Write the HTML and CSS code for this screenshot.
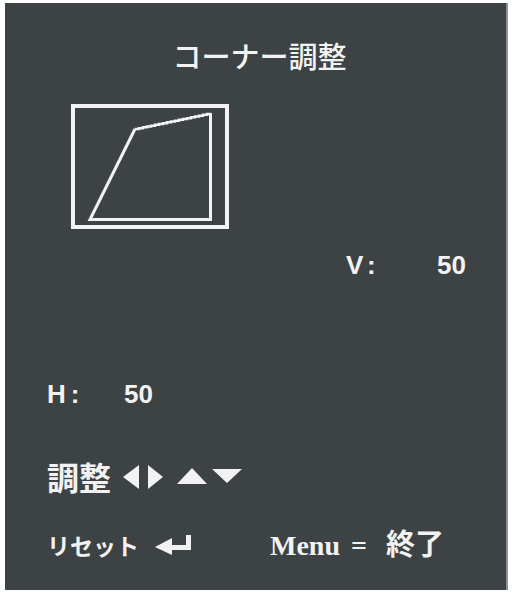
FILE: index.html
```html
<!DOCTYPE html>
<html lang="ja">
<head>
<meta charset="utf-8">
<link rel="stylesheet" href="styles.css">
</head>
<body>
<div class="panel">
  <div class="title">コーナー調整</div>
  <svg class="diagram" width="158" height="126" viewBox="0 0 158 126">
    <rect x="2" y="2" width="154" height="121" fill="none" stroke="#f2f2f2" stroke-width="4"/>
    <polyline points="64,25 19,115.5 139.5,115.5 139.5,9" fill="none" stroke="#f2f2f2" stroke-width="3"/>
    <polyline points="64,25 68,25 68,24.2 72,24.2 72,23.3 76,23.3 76,22.5 80,22.5 80,21.7 84,21.7 84,20.8 88,20.8 88,20 92,20 92,19.2 96,19.2 96,18.3 100,18.3 100,17.5 104,17.5 104,16.7 108,16.7 108,15.8 112,15.8 112,15 116,15 116,14.2 120,14.2 120,13.3 124,13.3 124,12.5 128,12.5 128,11.7 132,11.7 132,10.8 136,10.8 136,10 139.5,10" fill="none" stroke="#f2f2f2" stroke-width="2.5"/>
  </svg>
  <div class="row-v"><span class="lbl lbl-v">V:</span><span class="val">50</span></div>
  <div class="row-h"><span class="lbl lbl-h">H:</span><span class="val">50</span></div>
  <div class="row-adj">
    <span class="jp-big">調整</span>
    <svg class="keys" width="120" height="30" viewBox="0 0 120 30">
      <polygon points="0,16 16,4 16,28" fill="#f2f2f2"/>
      <polygon points="25,4 40,16 25,28" fill="#f2f2f2"/>
      <polygon points="54,23 69,7 84,23" fill="#f2f2f2"/>
      <polygon points="89,8 119,8 104,22" fill="#f2f2f2"/>
    </svg>
  </div>
  <div class="row-bottom">
    <span class="jp-reset">リセット</span>
    <svg class="enter" width="36" height="20" viewBox="0 0 36 20">
      <polygon points="0,12 17,3 17,20" fill="#f2f2f2"/>
      <rect x="16" y="10" width="20" height="5" fill="#f2f2f2"/>
      <rect x="31" y="0" width="5" height="15" fill="#f2f2f2"/>
    </svg>
    <span class="menu">Menu</span><span class="eq">=</span><span class="jp-end">終了</span>
  </div>
</div>
</body>
</html>
```

FILE: styles.css
```css
html, body {
  margin: 0;
  padding: 0;
  background: #ffffff;
}

.panel {
  margin: 3px 0 0 5px;
  width: 503px;
  height: 587px;
  box-sizing: border-box;
  background: #3d4244;
  border-right: 2px solid #8e9192;
  color: #f2f2f2;
  padding: 38px 0 0 42px;
  font-family: "Liberation Sans", Arial, sans-serif;
}

.title {
  font-family: "Noto Sans CJK JP", sans-serif;
  font-size: 29px;
  line-height: 28px;
  font-weight: 500;
  text-align: center;
  margin-left: -42px;
  padding-left: 8px;
}

.diagram {
  display: block;
  margin: 35px 0 0 24px;
}

.row-v,
.row-h {
  display: flex;
  font-size: 26px;
  line-height: 26px;
  font-weight: bold;
}

.row-v {
  margin: 22px 0 0 299px;
}

.row-h {
  margin: 103px 0 0 0;
}

.lbl-v {
  width: 91px;
  letter-spacing: 5px;
}

.lbl-h {
  width: 77px;
  letter-spacing: 5px;
}

.row-adj {
  display: flex;
  align-items: center;
  margin-top: 53px;
  height: 32px;
}

.jp-big {
  font-family: "Noto Sans CJK JP", sans-serif;
  font-size: 32px;
  line-height: 32px;
  font-weight: bold;
}

.keys {
  display: block;
  margin-left: 12px;
}

.row-bottom {
  display: flex;
  align-items: baseline;
  margin-top: 35px;
  line-height: 30px;
}

.jp-reset {
  font-family: "Noto Sans CJK JP", sans-serif;
  font-size: 23px;
  font-weight: bold;
}

.enter {
  display: block;
  align-self: center;
  margin-left: 16px;
  position: relative;
  top: 1px;
}

.menu,
.eq {
  font-family: "Liberation Serif", "Times New Roman", serif;
  font-size: 28px;
  font-weight: bold;
}

.menu {
  margin-left: 79px;
}

.eq {
  margin-left: 11px;
}

.jp-end {
  font-family: "Noto Sans CJK JP", sans-serif;
  font-size: 29px;
  font-weight: bold;
  margin-left: 19px;
}
```
